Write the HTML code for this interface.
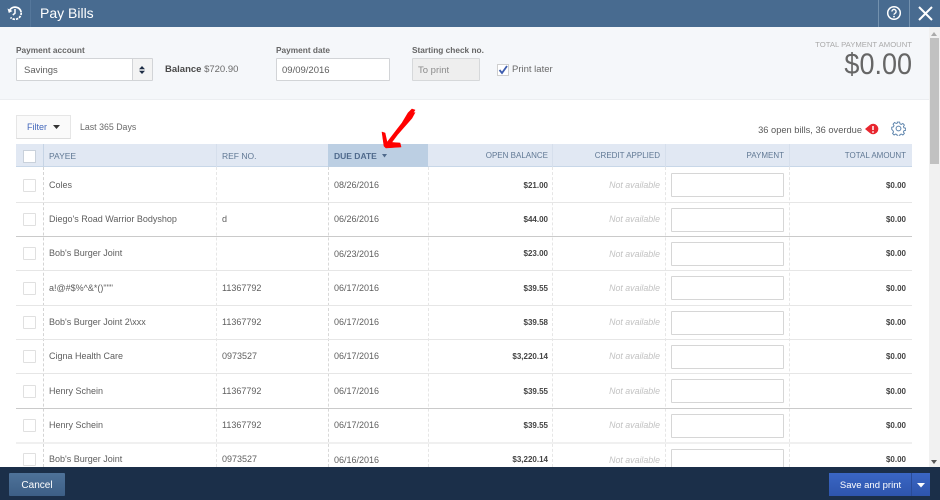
<!DOCTYPE html>
<html><head><meta charset="utf-8"><style>
html,body{margin:0;padding:0;background:#fff}
#p{position:relative;width:940px;height:500px;overflow:hidden;background:#fff;font-family:"Liberation Sans",sans-serif;font-size:9px;color:#5e5e5e}
#p div{position:absolute;white-space:nowrap}
.sep{left:16px;width:896px;height:1px;background:#e6e6e6}
.v{top:167px;height:300px;width:0;border-left:1px dashed #e6e6e6}
.cb{left:23px;width:11px;height:11px;border:1px solid #e0e0e0;background:#fff;border-radius:1px;margin-top:0}
.t{height:12px;line-height:12px}
.pay{left:49px}.ref{left:222px}.due{left:334px}
.ob{left:430px;width:118px;text-align:right;color:#444;font-weight:bold;font-size:8px;margin-top:1px}
.ca{left:555px;width:105px;text-align:right;font-style:italic;color:#c2c2c2;font-size:8.8px}
.ta{left:790px;width:116px;text-align:right;color:#444;font-weight:bold;font-size:8px;margin-top:1px}
.in{left:671px;width:111px;height:22px;border:1px solid #d6d6d6;background:#fff;border-radius:1px}
.h{top:144px;height:23px;line-height:24px;color:#607894;font-size:8.5px}
.h2{font-size:8px}
.lab{top:44px;font-size:8.3px;font-weight:bold;color:#666;line-height:12px}
</style></head><body><div id="p">

<div style="left:0;top:0;width:940px;height:27px;background:#486b90"></div>
<div style="left:30px;top:0;width:1px;height:27px;background:#55779b"></div>
<div style="left:878px;top:0;width:1px;height:27px;background:#7391ae"></div>
<div style="left:909px;top:0;width:1px;height:27px;background:#7391ae"></div>
<svg style="position:absolute;left:6px;top:4px" width="18" height="18" viewBox="0 0 18 18" fill="none" stroke="#fff" stroke-width="1.7"><path d="M3.800 6A6.300 6.300 0 0 1 15.200 8"/><path d="M15.200 8.600A6.300 6.300 0 0 1 4.500 13.500" stroke-dasharray="2.400 1"/><path d="M1.500 4.500L2.800 9L6.500 7z" fill="#fff" stroke="none"/><path d="M9 5V9.200L6.800 11" stroke-width="1.500"/></svg>
<div style="left:40px;top:3px;font-size:14px;line-height:19px;color:#fff;margin-top:1px">Pay Bills</div>
<svg style="position:absolute;left:885px;top:5px" width="18" height="18" viewBox="0 0 18 18" fill="none" stroke="#fff"><circle cx="9" cy="8" r="6.300" stroke-width="1.500"/><path d="M6.900 6.500a2.100 2.100 0 1 1 3.200 1.800c-.8.500-1.100.8-1.100 1.500" stroke-width="1.400"/><circle cx="9" cy="11.600" r=".9" fill="#fff" stroke="none"/></svg>
<svg style="position:absolute;left:917px;top:5px" width="16" height="16" viewBox="0 0 16 16" stroke="#fff" stroke-width="2"><path d="M2 2L15 15M15 2L2 15"/></svg>

<div style="left:0;top:27px;width:929px;height:72px;background:#f5f7fa;border-bottom:1px solid #eceef1"></div>
<div class="lab" style="left:16px">Payment account</div>
<div style="left:16px;top:58px;width:135px;height:21px;border:1px solid #d2d4d7;background:#fff;border-radius:1px"></div>
<div style="left:132px;top:59px;width:19px;height:21px;background:#f3f3f3;border-left:1px solid #d2d4d7"></div>
<svg style="position:absolute;left:139px;top:66px" width="6" height="8" viewBox="0 0 6 8" fill="#1d2c44"><path d="M3 0L6 3.300H0zM3 8L0 4.700H6z"/></svg>
<div class="t" style="left:24px;top:65px;font-size:9.500px">Savings</div>
<div class="t" style="left:165px;top:64px;font-size:9.500px;color:#6a6a6a"><b style="color:#4a4a4a">Balance</b> $720.90</div>
<div class="lab" style="left:276px">Payment date</div>
<div style="left:276px;top:58px;width:112px;height:21px;border:1px solid #d2d4d7;background:#fff;border-radius:1px"></div>
<div class="t" style="left:282px;top:65px;font-size:9.500px">09/09/2016</div>
<div class="lab" style="left:412px">Starting check no.</div>
<div style="left:412px;top:58px;width:66px;height:21px;border:1px solid #d6d8da;background:#eeeeee;border-radius:1px"></div>
<div class="t" style="left:418px;top:65px;font-size:9.500px;color:#8c8c8c">To print</div>
<div style="left:497px;top:64px;width:10px;height:10px;border:1px solid #cfcfcf;background:#fff"></div>
<svg style="position:absolute;left:498px;top:65px" width="11" height="10" viewBox="0 0 11 10" fill="none" stroke="#3d5cae" stroke-width="1.800"><path d="M1.500 5L4 8L9 1"/></svg>
<div class="t" style="left:512px;top:64px;font-size:9.500px;color:#6a6a6a">Print later</div>
<div style="left:700px;top:39px;width:212px;text-align:right;font-size:7.700px;line-height:11px;color:#aaa">TOTAL PAYMENT AMOUNT</div>
<div style="left:700px;top:47px;width:212px;text-align:right;font-size:30px;line-height:36px;color:#666;transform:scaleX(.9);transform-origin:right center">$0.00</div>

<div style="left:16px;top:115px;width:53px;height:22px;border:1px solid #e6e6e6;border-bottom:1px solid #dcdcdc;background:#fafafa"></div>
<div class="t" style="left:27px;top:121px;color:#4468bb">Filter</div>
<svg style="position:absolute;left:53px;top:125px" width="7" height="4" viewBox="0 0 7 4" fill="#333"><path d="M0 0H7L3.500 4z"/></svg>
<div class="t" style="left:80px;top:121px;color:#6a6a6a;font-size:8.800px">Last 365 Days</div>
<div class="t" style="left:640px;top:124px;width:222px;text-align:right;color:#5a5a5a;font-size:9.300px">36 open bills, 36 overdue</div>
<svg style="position:absolute;left:865px;top:123px" width="14" height="12" viewBox="0 0 14 12"><path d="M0 6L4.500 2.300A5.200 5.200 0 1 1 4.500 9.700z" fill="#e8262f"/><path d="M8 3V7" stroke="#fff" stroke-width="1.500"/><circle cx="8" cy="9" r=".9" fill="#fff"/></svg>
<svg style="position:absolute;left:891px;top:121px" width="15" height="15" viewBox="0 0 15 15" fill="none" stroke="#5b82ab" stroke-width="1"><circle cx="7.500" cy="7.500" r="2.400"/><path d="M6.300 1h2.400l.4 1.900 1.300.6 1.700-1 1.600 1.700-1 1.600.6 1.300 1.800.4v2.200l-1.800.4-.6 1.300 1 1.600-1.600 1.600-1.700-1-1.300.6-.4 1.700H6.300l-.4-1.700-1.300-.6-1.700 1-1.600-1.600 1-1.600-.6-1.300L.4 8.700V6.500l1.800-.4.600-1.300-1-1.600 1.600-1.700 1.700 1 1.300-.6z" transform="translate(.35 .1) scale(.95)"/></svg>

<div style="left:16px;top:144px;width:896px;height:23px;background:#e1e8f3;border-bottom:1px solid #c8d7e8;box-sizing:border-box"></div>
<div style="left:328px;top:144px;width:100px;height:23px;background:#bccfe3"></div>
<div style="left:43px;top:144px;width:1px;height:23px;background:#c6d4e5"></div>
<div style="left:216px;top:144px;width:1px;height:23px;background:#d6dfec"></div>
<div style="left:552px;top:144px;width:1px;height:23px;background:#d6dfec"></div>
<div style="left:665px;top:144px;width:1px;height:23px;background:#d6dfec"></div>
<div style="left:789px;top:144px;width:1px;height:23px;background:#d6dfec"></div>
<div style="left:23px;top:150px;width:11px;height:11px;border:1px solid #c9d1db;background:#fff"></div>
<div class="h" style="left:49px">PAYEE</div>
<div class="h" style="left:222px">REF NO.</div>
<div class="h" style="left:334px;font-weight:bold;color:#4f6a8c">DUE DATE</div>
<svg style="position:absolute;left:382px;top:154px" width="5" height="4" viewBox="0 0 5 4" fill="#4f6a8c"><path d="M0 0H5L2.500 3.500z"/></svg>
<div class="h h2" style="left:430px;width:118px;text-align:right">OPEN BALANCE</div>
<div class="h h2" style="left:555px;width:105px;text-align:right">CREDIT APPLIED</div>
<div class="h h2" style="left:670px;width:114px;text-align:right">PAYMENT</div>
<div class="h h2" style="left:790px;width:116px;text-align:right">TOTAL AMOUNT</div>

<div class="v" style="left:43px;border-color:#d4d4d4"></div><div class="v" style="left:216px"></div><div class="v" style="left:328px;border-color:#d8d8d8"></div><div class="v" style="left:428px"></div><div class="v" style="left:552px"></div><div class="v" style="left:665px"></div><div class="v" style="left:789px"></div>

<div class="sep" style="top:202px"></div>
<div class="sep" style="top:236px;background:#cacaca"></div>
<div class="sep" style="top:270px"></div>
<div class="sep" style="top:305px"></div>
<div class="sep" style="top:339px"></div>
<div class="sep" style="top:373px"></div>
<div class="sep" style="top:408px;background:#cacaca"></div>
<div class="sep" style="top:442px;height:2px;background:#f0f0f0"></div>

<div class="cb" style="top:179px"></div><div class="t pay" style="top:179px">Coles</div><div class="t due" style="top:179px">08/26/2016</div><div class="t ob" style="top:179px">$21.00</div><div class="t ca" style="top:179px">Not available</div><div class="in" style="top:173px"></div><div class="t ta" style="top:179px">$0.00</div>

<div class="cb" style="top:213px"></div><div class="t pay" style="top:213px">Diego's Road Warrior Bodyshop</div><div class="t ref" style="top:213px">d</div><div class="t due" style="top:213px">06/26/2016</div><div class="t ob" style="top:213px">$44.00</div><div class="t ca" style="top:213px">Not available</div><div class="in" style="top:208px"></div><div class="t ta" style="top:213px">$0.00</div>

<div class="cb" style="top:247px"></div><div class="t pay" style="top:247px">Bob's Burger Joint</div><div class="t due" style="top:248px">06/23/2016</div><div class="t ob" style="top:247px">$23.00</div><div class="t ca" style="top:248px">Not available</div><div class="in" style="top:242px"></div><div class="t ta" style="top:247px">$0.00</div>

<div class="cb" style="top:282px"></div><div class="t pay" style="top:282px">a!@#$%^&amp;*()"""</div><div class="t ref" style="top:282px">11367792</div><div class="t due" style="top:282px">06/17/2016</div><div class="t ob" style="top:282px">$39.55</div><div class="t ca" style="top:282px">Not available</div><div class="in" style="top:276px"></div><div class="t ta" style="top:282px">$0.00</div>

<div class="cb" style="top:316px"></div><div class="t pay" style="top:316px">Bob's Burger Joint 2\xxx</div><div class="t ref" style="top:316px">11367792</div><div class="t due" style="top:316px">06/17/2016</div><div class="t ob" style="top:316px">$39.58</div><div class="t ca" style="top:316px">Not available</div><div class="in" style="top:311px"></div><div class="t ta" style="top:316px">$0.00</div>

<div class="cb" style="top:350px"></div><div class="t pay" style="top:350px">Cigna Health Care</div><div class="t ref" style="top:350px">0973527</div><div class="t due" style="top:350px">06/17/2016</div><div class="t ob" style="top:350px">$3,220.14</div><div class="t ca" style="top:350px">Not available</div><div class="in" style="top:345px"></div><div class="t ta" style="top:350px">$0.00</div>

<div class="cb" style="top:385px"></div><div class="t pay" style="top:385px">Henry Schein</div><div class="t ref" style="top:385px">11367792</div><div class="t due" style="top:385px">06/17/2016</div><div class="t ob" style="top:385px">$39.55</div><div class="t ca" style="top:385px">Not available</div><div class="in" style="top:379px"></div><div class="t ta" style="top:385px">$0.00</div>

<div class="cb" style="top:419px"></div><div class="t pay" style="top:419px">Henry Schein</div><div class="t ref" style="top:419px">11367792</div><div class="t due" style="top:419px">06/17/2016</div><div class="t ob" style="top:419px">$39.55</div><div class="t ca" style="top:419px">Not available</div><div class="in" style="top:414px"></div><div class="t ta" style="top:419px">$0.00</div>

<div class="cb" style="top:453px"></div><div class="t pay" style="top:453px">Bob's Burger Joint</div><div class="t ref" style="top:453px">0973527</div><div class="t due" style="top:454px">06/16/2016</div><div class="t ob" style="top:453px">$3,220.14</div><div class="t ca" style="top:454px">Not available</div><div class="in" style="top:449px"></div><div class="t ta" style="top:453px">$0.00</div>

<svg style="position:absolute;left:372px;top:102px" width="50" height="50" viewBox="0 0 50 50" fill="#f00" stroke="#f00" stroke-width=".6" stroke-linejoin="round"><path d="M13 43L30 21L36 11L40 7L43 8L41 11L43 10.500L40 16L33 24L26 32L17 44z"/><path d="M10 30L13 31L15 40L28 41L29 45L14 46L12 44z"/></svg>

<div style="left:929px;top:27px;width:11px;height:440px;background:#f1f1f1"></div>
<div style="left:930px;top:38px;width:9px;height:126px;background:#c1c1c1"></div>
<svg style="position:absolute;left:931px;top:32px" width="6" height="4" viewBox="0 0 6 4" fill="#aaa"><path d="M3 0L6 4H0z"/></svg>
<svg style="position:absolute;left:931px;top:460px" width="6" height="4" viewBox="0 0 6 4" fill="#555"><path d="M0 0H6L3 4z"/></svg>

<div style="left:0;top:467px;width:940px;height:33px;background:#1b2f49"></div>
<div style="left:9px;top:473px;width:56px;height:23px;line-height:25px;text-align:center;background:linear-gradient(#4e7299,#3d5f86);color:#fff;font-size:10px;border-radius:1px">Cancel</div>
<div style="left:829px;top:473px;width:83px;height:23px;line-height:25px;text-align:center;background:linear-gradient(#3a66c4,#2e55ad);color:#fff;font-size:9.500px">Save and print</div>
<div style="left:911px;top:473px;width:19px;height:23px;background:linear-gradient(#3a66c4,#2e55ad);border-left:1px solid #2a4c98;box-sizing:border-box"></div>
<svg style="position:absolute;left:917px;top:483px" width="8" height="5" viewBox="0 0 8 5" fill="#fff"><path d="M0 0H8L4 4.500z"/></svg>
</div></body></html>
